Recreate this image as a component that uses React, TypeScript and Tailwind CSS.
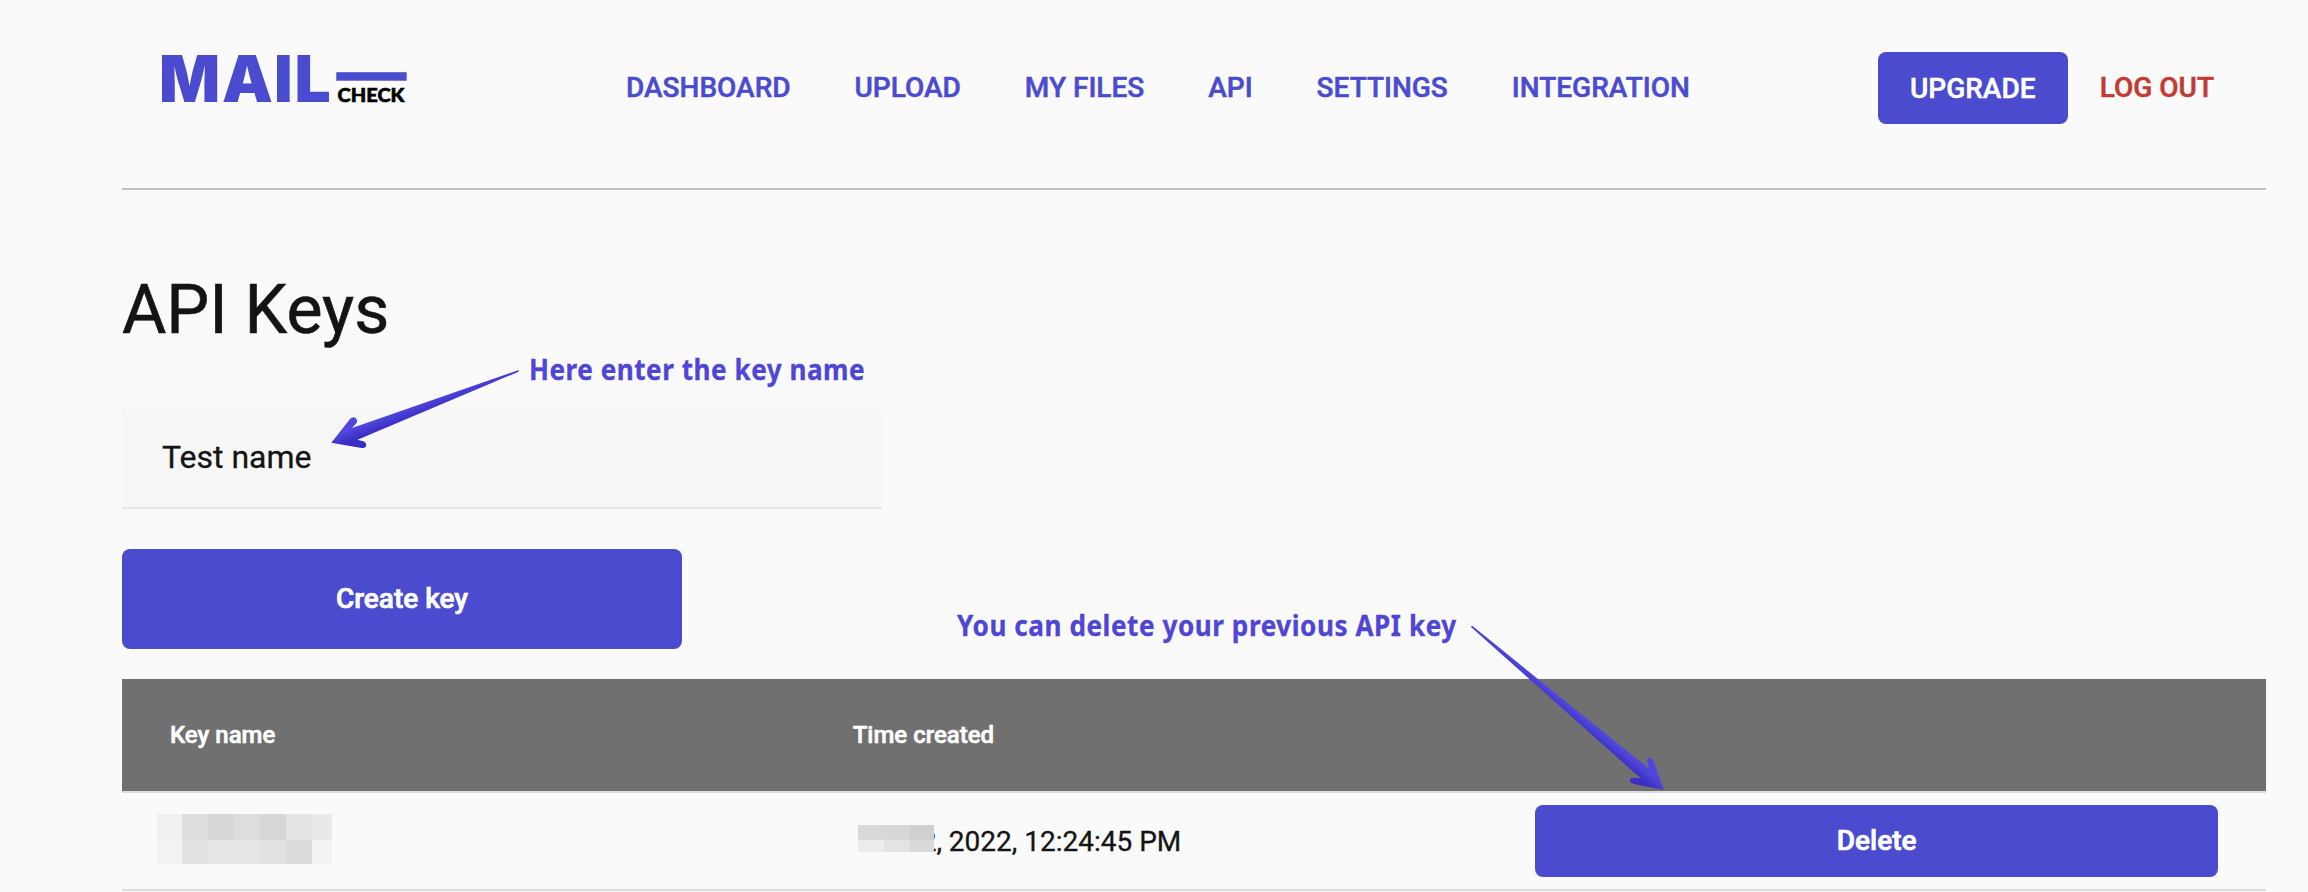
const NAV = ["DASHBOARD", "UPLOAD", "MY FILES", "API", "SETTINGS", "INTEGRATION"];

function Logo() {
  return (
    <svg width="270" height="90" viewBox="-10 -20 270 90" className="-mt-[20px] block shrink-0">
      <text x="-3 60 112 132.500" y="49.500" fontSize="64" fontWeight="900" className="fill-[#4a4bcf] font-['Inter',sans-serif]">
        MAIL
      </text>
      <rect x="174.300" y="20.200" width="70.400" height="8.500" className="fill-[#4a4bcf]" />
      <text x="175.500" y="49.500" fontSize="19.500" fontWeight="900" strokeWidth="0.600" textLength="67" lengthAdjust="spacingAndGlyphs" className="fill-black stroke-black font-['Lato',sans-serif]">
        CHECK
      </text>
    </svg>
  );
}

function Mask({ className }: { className: string }) {
  return <span className={className} />;
}

function Header() {
  return (
    <header className="flex h-[190px] border-b-2 border-[#c0c0c0] pt-[52px] text-[28px] leading-[72px] font-medium text-[#4a4bcf] [-webkit-text-stroke:0.5px]">
      <div className="ml-[30px] w-[474px] [-webkit-text-stroke:0px]">
        <Logo />
      </div>
      <nav className="flex grow gap-[64px]">
        {NAV.map((item) => (
          <a key={item} className="h-[72px] whitespace-nowrap">
            {item}
          </a>
        ))}
      </nav>
      <button className="mr-[32px] h-[72px] w-[190px] rounded-[8px] bg-[#4a4bcf] pt-px text-center text-white">UPGRADE</button>
      <a className="mr-[52px] whitespace-nowrap text-[#c33a33]">LOG OUT</a>
    </header>
  );
}

function HintArrows() {
  return (
    <svg width="2308" height="892" viewBox="0 0 2308 892" className="pointer-events-none absolute top-0 left-0">
      <defs>
        <linearGradient id="hintA" gradientUnits="userSpaceOnUse" x1="356" y1="422" x2="362" y2="438">
          <stop offset="0.3" stopColor="#5147db" />
          <stop offset="0.9" stopColor="#3a2fc4" />
        </linearGradient>
        <linearGradient id="hintB" gradientUnits="userSpaceOnUse" x1="1638" y1="759" x2="1628" y2="771">
          <stop offset="0.2" stopColor="#5147db" />
          <stop offset="0.85" stopColor="#3a2fc4" />
        </linearGradient>
      </defs>
      <path
        fill="url(#hintA)"
        d="M331.300 442.700L350 419Q352.500 416 355.500 418Q358 420.500 356.500 423L352 428L518 370.200Q519.500 370.500 518.500 371.700L357.500 439.800L364 441.500Q367 443 366 446.500Q364.500 448.500 361.500 448Z"
      />
      <path
        fill="url(#hintB)"
        d="M1664 790L1634 784Q1630.500 783.500 1630 780.500Q1630.500 777.500 1634 777.700L1641 778.500L1471 627Q1471 625.500 1472.500 626L1649 768.700L1647 761.500Q1647 758 1650 757.700Q1652.500 758 1653.500 761Z"
      />
    </svg>
  );
}

export default function App() {
  return (
    <div className="relative h-[892px] w-[2308px] overflow-hidden bg-[#fafafa] pr-[42px] pl-[122px] font-['Roboto',sans-serif] text-[#141414] [-webkit-text-stroke:0.3px]">
      <Header />
      <main>
        <h1 className="mt-[80px] h-[139px] text-[68px] leading-[80px] [-webkit-text-stroke:0.6px]">API Keys</h1>
        <div className="h-[100px] w-[760px] border-b-2 border-[#e6e6e6] bg-[#f7f7f7] pl-[40px] text-[32px] leading-[96px]">Test name</div>
        <button className="mt-[40px] block h-[100px] w-[560px] rounded-[8px] bg-[#4a4bcf] text-[28px] font-medium text-white [-webkit-text-stroke:0.7px]">Create key</button>
        <section className="mt-[30px]">
          <div className="grid h-[114px] grid-cols-3 border-b-2 border-[#dcdcdc] bg-[#707070] px-[48px] text-[24px] leading-[112px] font-medium text-white [-webkit-text-stroke:0.6px]">
            <span>Key name</span>
            <span>Time created</span>
          </div>
          <div className="grid h-[98px] grid-cols-3 items-center border-b-2 border-[#dcdcdc] px-[48px] text-[28px]">
            <div className="-ml-[13px] grid w-[175px] -translate-y-[2px] grid-cols-[25px_26px_26px_26px_26px_26px_20px] grid-rows-[26px_24px]">
              <Mask className="bg-[#f0f0f0]" />
              <Mask className="bg-[#dddddd]" />
              <Mask className="bg-[#d7d7d7]" />
              <Mask className="bg-[#dddddd]" />
              <Mask className="bg-[#d7d7d7]" />
              <Mask className="bg-[#e4e4e4]" />
              <Mask className="bg-[#e9e9e9]" />
              <Mask className="bg-[#f2f2f2]" />
              <Mask className="bg-[#e2e2e2]" />
              <Mask className="bg-[#e6e6e6]" />
              <Mask className="bg-[#e6e6e6]" />
              <Mask className="bg-[#e2e2e2]" />
              <Mask className="bg-[#dcdcdc]" />
              <Mask className="bg-[#f3f3f3]" />
            </div>
            <div className="relative flex h-[96px] pl-[68px] leading-[98px]">
              <span className="whitespace-nowrap">2, 2022, 12:24:45 PM</span>
              <div className="absolute top-[32px] left-[5px] grid grid-cols-[26px_26px_24px] grid-rows-[15px_12px]">
                <Mask className="bg-[#d9d9d9]" />
                <Mask className="bg-[#d7d7d7]" />
                <Mask className="bg-[#d0d0d0]" />
                <Mask className="bg-[#ececec]" />
                <Mask className="bg-[#e3e3e3]" />
                <Mask className="bg-[#d9d9d9]" />
              </div>
            </div>
            <button className="h-[72px] rounded-[8px] bg-[#4a4bcf] font-medium text-white [-webkit-text-stroke:0.7px]">Delete</button>
          </div>
        </section>
      </main>
      <HintArrows />
      <p className="absolute top-[349px] left-[529px] origin-left scale-x-[0.9] font-['Noto_Sans',sans-serif] text-[29px] leading-[40px] font-bold tracking-[0.58px] whitespace-nowrap text-[#4f46d6]">
        Here enter the key name
      </p>
      <p className="absolute top-[605px] left-[957px] origin-left scale-x-[0.9] font-['Noto_Sans',sans-serif] text-[29px] leading-[40px] font-bold tracking-[0.62px] whitespace-nowrap text-[#4f46d6]">
        You can delete your previous API key
      </p>
    </div>
  );
}
